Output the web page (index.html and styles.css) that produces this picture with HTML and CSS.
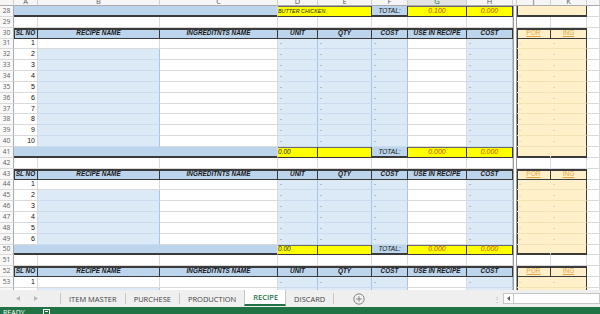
FILE: index.html
```html
<!DOCTYPE html>
<html lang="en">
<head>
    <meta charset="UTF-8">
    <title>Recipe Costing</title>
    <link rel="stylesheet" href="styles.css">
</head>
<body>
    <div class="sheet">
        <table class="grid">
            <colgroup>
                <col class="w-rn"><col class="w-a"><col class="w-b"><col class="w-c"><col class="w-d"><col class="w-e">
                <col class="w-f"><col class="w-g"><col class="w-h"><col class="w-i"><col class="w-j"><col class="w-k"><col class="w-l">
            </colgroup>
            <thead>
                <tr class="ch">
                    <th></th><th>A</th><th>B</th><th>C</th><th>D</th><th>E</th><th>F</th><th class="sel">G</th><th>H</th><th></th><th>J</th><th>K</th><th></th>
                </tr>
            </thead>
            <tbody>
                <tr>
                    <td class="rn">28</td>
                    <td colspan="3" class="b foot"></td>
                    <td colspan="2" class="y title">BUTTER CHICKEN</td>
                    <td class="b lbl foot">TOTAL:</td>
                    <td class="y num">0.100</td>
                    <td class="y num">0.000</td>
                    <td class="gap"></td>
                    <td colspan="2" class="be box-l box-r foot"></td>
                    <td></td>
                </tr>
                <tr>
                    <td class="rn">29</td><td></td><td></td><td></td><td></td><td></td><td></td><td></td><td></td><td class="gap"></td><td></td><td></td><td></td>
                </tr>
                <tr class="hd">
                    <td class="rn">30</td>
                    <th class="first">SL NO</th><th>RECIPE NAME</th><th>INGREDITNTS NAME</th><th>UNIT</th><th>QTY</th><th>COST</th><th>USE IN RECIPE</th><th>COST</th>
                    <td class="gap"></td>
                    <th class="lnk box-l">POR</th><th class="lnk">ING</th>
                    <td></td>
                </tr>
                <tr><td class="rn">31</td><td class="sl">1</td><td></td><td></td><td class="lb d">-</td><td class="lb d">-</td><td class="lb d">-</td><td></td><td class="lb d">-</td><td class="gap"></td><td class="be d box-l">-</td><td class="be d box-r">-</td><td></td></tr>
                <tr><td class="rn">32</td><td class="sl">2</td><td class="lb"></td><td></td><td class="lb d">-</td><td class="lb d">-</td><td class="lb d">-</td><td></td><td class="lb d">-</td><td class="gap"></td><td class="be d box-l">-</td><td class="be d box-r">-</td><td></td></tr>
                <tr><td class="rn">33</td><td class="sl">3</td><td class="lb"></td><td></td><td class="lb d">-</td><td class="lb d">-</td><td class="lb d">-</td><td></td><td class="lb d">-</td><td class="gap"></td><td class="be d box-l">-</td><td class="be d box-r">-</td><td></td></tr>
                <tr><td class="rn">34</td><td class="sl">4</td><td class="lb"></td><td></td><td class="lb d">-</td><td class="lb d">-</td><td class="lb d">-</td><td></td><td class="lb d">-</td><td class="gap"></td><td class="be d box-l">-</td><td class="be d box-r">-</td><td></td></tr>
                <tr><td class="rn">35</td><td class="sl">5</td><td class="lb"></td><td></td><td class="lb d">-</td><td class="lb d">-</td><td class="lb d">-</td><td></td><td class="lb d">-</td><td class="gap"></td><td class="be d box-l">-</td><td class="be d box-r">-</td><td></td></tr>
                <tr><td class="rn">36</td><td class="sl">6</td><td class="lb"></td><td></td><td class="lb d">-</td><td class="lb d">-</td><td class="lb d">-</td><td></td><td class="lb d">-</td><td class="gap"></td><td class="be d box-l">-</td><td class="be d box-r">-</td><td></td></tr>
                <tr><td class="rn">37</td><td class="sl">7</td><td class="lb"></td><td></td><td class="lb d">-</td><td class="lb d">-</td><td class="lb d">-</td><td></td><td class="lb d">-</td><td class="gap"></td><td class="be d box-l">-</td><td class="be d box-r">-</td><td></td></tr>
                <tr><td class="rn">38</td><td class="sl">8</td><td class="lb"></td><td></td><td class="lb d">-</td><td class="lb d">-</td><td class="lb d">-</td><td></td><td class="lb d">-</td><td class="gap"></td><td class="be d box-l">-</td><td class="be d box-r">-</td><td></td></tr>
                <tr><td class="rn">39</td><td class="sl">9</td><td class="lb"></td><td></td><td class="lb d">-</td><td class="lb d">-</td><td class="lb d">-</td><td></td><td class="lb d">-</td><td class="gap"></td><td class="be d box-l">-</td><td class="be d box-r">-</td><td></td></tr>
                <tr><td class="rn">40</td><td class="sl">10</td><td class="lb"></td><td></td><td class="lb d">-</td><td class="lb d">-</td><td class="lb d">-</td><td></td><td class="lb d">-</td><td class="gap"></td><td class="be d box-l">-</td><td class="be d box-r">-</td><td></td></tr>
                <tr>
                    <td class="rn">41</td>
                    <td colspan="3" class="b foot"></td>
                    <td class="y sub">0.00</td><td class="y"></td>
                    <td class="b lbl foot">TOTAL:</td>
                    <td class="y num">0.000</td><td class="y num">0.000</td>
                    <td class="gap"></td>
                    <td class="be box-l foot"></td><td class="be box-r foot"></td>
                    <td></td>
                </tr>
                <tr>
                    <td class="rn">42</td><td></td><td></td><td></td><td></td><td></td><td></td><td></td><td></td><td class="gap"></td><td></td><td></td><td></td>
                </tr>
                <tr class="hd">
                    <td class="rn">43</td>
                    <th class="first">SL NO</th><th>RECIPE NAME</th><th>INGREDITNTS NAME</th><th>UNIT</th><th>QTY</th><th>COST</th><th>USE IN RECIPE</th><th>COST</th>
                    <td class="gap"></td>
                    <th class="lnk box-l">POR</th><th class="lnk">ING</th>
                    <td></td>
                </tr>
                <tr><td class="rn">44</td><td class="sl">1</td><td></td><td></td><td class="lb d">-</td><td class="lb d">-</td><td class="lb d">-</td><td></td><td class="lb d">-</td><td class="gap"></td><td class="be d box-l">-</td><td class="be d box-r">-</td><td></td></tr>
                <tr><td class="rn">45</td><td class="sl">2</td><td class="lb"></td><td></td><td class="lb d">-</td><td class="lb d">-</td><td class="lb d">-</td><td></td><td class="lb d">-</td><td class="gap"></td><td class="be d box-l">-</td><td class="be d box-r">-</td><td></td></tr>
                <tr><td class="rn">46</td><td class="sl">3</td><td class="lb"></td><td></td><td class="lb d">-</td><td class="lb d">-</td><td class="lb d">-</td><td></td><td class="lb d">-</td><td class="gap"></td><td class="be d box-l">-</td><td class="be d box-r">-</td><td></td></tr>
                <tr><td class="rn">47</td><td class="sl">4</td><td class="lb"></td><td></td><td class="lb d">-</td><td class="lb d">-</td><td class="lb d">-</td><td></td><td class="lb d">-</td><td class="gap"></td><td class="be d box-l">-</td><td class="be d box-r">-</td><td></td></tr>
                <tr><td class="rn">48</td><td class="sl">5</td><td class="lb"></td><td></td><td class="lb d">-</td><td class="lb d">-</td><td class="lb d">-</td><td></td><td class="lb d">-</td><td class="gap"></td><td class="be d box-l">-</td><td class="be d box-r">-</td><td></td></tr>
                <tr><td class="rn">49</td><td class="sl">6</td><td class="lb"></td><td></td><td class="lb d">-</td><td class="lb d">-</td><td class="lb d">-</td><td></td><td class="lb d">-</td><td class="gap"></td><td class="be d box-l">-</td><td class="be d box-r">-</td><td></td></tr>
                <tr>
                    <td class="rn">50</td>
                    <td colspan="3" class="b foot"></td>
                    <td class="y sub">0.00</td><td class="y"></td>
                    <td class="b lbl foot">TOTAL:</td>
                    <td class="y num">0.000</td><td class="y num">0.000</td>
                    <td class="gap"></td>
                    <td class="be box-l foot"></td><td class="be box-r foot"></td>
                    <td></td>
                </tr>
                <tr>
                    <td class="rn">51</td><td></td><td></td><td></td><td></td><td></td><td></td><td></td><td></td><td class="gap"></td><td></td><td></td><td></td>
                </tr>
                <tr class="hd">
                    <td class="rn">52</td>
                    <th class="first">SL NO</th><th>RECIPE NAME</th><th>INGREDITNTS NAME</th><th>UNIT</th><th>QTY</th><th>COST</th><th>USE IN RECIPE</th><th>COST</th>
                    <td class="gap"></td>
                    <th class="lnk box-l">POR</th><th class="lnk">ING</th>
                    <td></td>
                </tr>
                <tr><td class="rn">53</td><td class="sl">1</td><td></td><td></td><td class="lb d">-</td><td class="lb d">-</td><td class="lb d">-</td><td></td><td class="lb d">-</td><td class="gap"></td><td class="be d box-l">-</td><td class="be d box-r">-</td><td></td></tr>
                <tr><td class="rn"></td><td></td><td class="lb"></td><td></td><td class="lb"></td><td class="lb"></td><td class="lb"></td><td></td><td class="lb"></td><td class="gap"></td><td class="be box-l"></td><td class="be box-r"></td><td></td></tr>
            </tbody>
        </table>
    </div>

    <div class="tabbar">
        <div class="nav">
            <svg width="4" height="5" viewBox="0 0 4 5"><path d="M4 0 L0 2.5 L4 5 Z" fill="#b9b9b9"/></svg>
            <svg width="4" height="5" viewBox="0 0 4 5"><path d="M0 0 L4 2.5 L0 5 Z" fill="#b9b9b9"/></svg>
        </div>
        <span class="sep"></span>
        <div class="tab">ITEM MASTER</div>
        <span class="sep"></span>
        <div class="tab">PURCHESE</div>
        <span class="sep"></span>
        <div class="tab">PRODUCTION</div>
        <div class="tab active">RECIPE</div>
        <div class="tab">DISCARD</div>
        <span class="sep"></span>
        <div class="add">
            <svg width="12" height="12" viewBox="0 0 12 12">
                <circle cx="6" cy="6" r="5.2" fill="none" stroke="#7a7a7a" stroke-width="0.9"/>
                <path d="M6 3.2 V8.8 M3.2 6 H8.8" stroke="#7a7a7a" stroke-width="0.9"/>
            </svg>
        </div>
        <div class="split">&#8942;</div>
        <div class="hscroll">
            <span class="arrow"><svg width="3" height="5" viewBox="0 0 3 5"><path d="M3 0 L0 2.5 L3 5 Z" fill="#606060"/></svg></span>
            <span class="track"></span>
        </div>
    </div>

    <div class="status">
        <span class="ready">READY</span>
        <svg class="macro" width="8" height="6" viewBox="0 0 8 6">
            <rect x="0.5" y="0.5" width="6" height="5" fill="none" stroke="#ffffff" stroke-width="1"/>
            <rect x="2" y="2" width="3" height="1" fill="#ffffff"/>
        </svg>
    </div>
</body>
</html>
```

FILE: styles.css
```css
body {
    margin: 0;
    width: 600px;
    height: 314px;
    overflow: hidden;
    background: #fff;
    font-family: "Liberation Sans", Arial, sans-serif;
}

.sheet {
    height: 290px;
    overflow: hidden;
}

.grid {
    border-collapse: separate;
    border-spacing: 0;
    table-layout: fixed;
    width: 600px;
}

.w-rn { width: 14px; }
.w-a { width: 24px; }
.w-b { width: 122px; }
.w-c { width: 118px; }
.w-d { width: 40px; }
.w-e { width: 54px; }
.w-f { width: 36px; }
.w-g { width: 59px; }
.w-h { width: 46px; }
.w-i { width: 4px; }
.w-j { width: 34px; }
.w-k { width: 36px; }
.w-l { width: 13px; }

.grid td,
.grid th {
    padding: 0;
    border-right: 1px solid #dadada;
    border-bottom: 1px solid #dadada;
    font-weight: normal;
    line-height: 8px;
    white-space: nowrap;
    overflow: hidden;
    vertical-align: middle;
}

.grid tbody tr {
    height: 10.85px;
}

/* column letters, only bottom part visible */
.ch {
    height: 6px;
}
.ch th {
    background: #f6f6f6;
    border-right-color: #d0d0d0;
    border-bottom-color: #ababab;
    color: #5b5b5b;
    font-family: "Open Sans", sans-serif;
    font-size: 7.5px;
    line-height: 3px;
    vertical-align: top;
}
.ch th.sel {
    background: #e3e3e3;
    color: #217346;
}

.grid td.rn {
    background: #f8f8f8;
    border-right-color: #ababab;
    color: #5e5e5e;
    font-family: "Open Sans", sans-serif;
    font-size: 6.6px;
    text-align: center;
}

.b {
    background: #bcd4ec;
}
.lb {
    background: #dce9f6;
}
.grid td.lb {
    border-right-color: #a9c5e2;
    border-bottom-color: #c9dcf0;
}
.y {
    background: #ffff00;
}
.grid td.y {
    border-right-color: #3a3a3a;
    border-bottom-color: #3a3a3a;
    box-shadow: inset 0 1px 0 #6a6a6a;
}
.be {
    background: #fff0c9;
}
.grid td.be {
    border-right-color: #fff0c9;
    border-bottom-color: #f2e2b4;
}

.grid td.foot {
    border-bottom-color: #3a3a3a;
    box-shadow: inset 0 -1px 0 #3a3a3a;
}
.grid td.box-l,
.grid th.box-l {
    box-shadow: inset 1px 0 0 #3a3a3a;
}
.grid td.be.box-l.foot {
    box-shadow: inset 1px -1px 0 #3a3a3a;
}
.grid td.box-r {
    border-right-color: #3a3a3a;
}

.grid td.gap {
    border-left: 1px solid #9c9c9c;
    border-right: 1px solid #9c9c9c;
    border-bottom: none;
    background: #fff;
}

.title {
    color: #222;
    font-style: italic;
    font-size: 5.4px;
    padding-left: 1px;
}

.lbl {
    color: #111;
    font-size: 6.5px;
    font-style: italic;
    font-weight: bold;
    text-align: center;
}
.grid td.lbl {
    border-right-color: #3a3a3a;
}

.num {
    color: #c24a14;
    font-size: 7px;
    font-style: italic;
    font-weight: bold;
    text-align: center;
}

.sub {
    color: #222;
    font-size: 6.5px;
    font-style: italic;
    padding-left: 1px;
}

.sl {
    color: #111;
    font-size: 7px;
    text-align: right;
    padding-right: 2px !important;
}

.d {
    color: #555;
    font-size: 6px;
    padding-left: 2px !important;
}
.be.d {
    color: #c9a45a;
}

/* header rows */
.hd th {
    background: #bcd4ec;
    color: #151515;
    font-size: 6.4px;
    font-style: italic;
    font-weight: bold;
    text-align: center;
}
.grid .hd th {
    font-weight: bold;
    border-right-color: #3a3a3a;
    border-bottom-color: #3a3a3a;
    box-shadow: inset 0 2px 0 #3a3a3a;
}
.grid .hd th.first {
    box-shadow: inset 0 2px 0 #3a3a3a, inset 1px 0 0 #3a3a3a;
}
.grid .hd th.lnk {
    background: #fff0c9;
    color: #e2a640;
    font-style: normal;
    font-weight: normal;
    font-size: 6.6px;
    text-decoration: underline;
}
.grid .hd th.lnk.box-l {
    box-shadow: inset 0 2px 0 #3a3a3a, inset 1px 0 0 #3a3a3a;
}

/* sheet tabs */
.tabbar {
    height: 17px;
    background: #efefef;
    display: flex;
    align-items: stretch;
    font-family: "Open Sans", sans-serif;
    font-size: 7.5px;
    color: #444;
}
.nav {
    width: 60px;
    display: flex;
    align-items: center;
    gap: 14px;
    padding-left: 16px;
    box-sizing: border-box;
}
.sep {
    width: 1px;
    height: 11px;
    background: #c6c6c6;
    align-self: center;
}
.tab {
    padding: 0 8px;
    display: flex;
    align-items: center;
    white-space: nowrap;
}
.tab.active {
    background: #fff;
    color: #217346;
    font-weight: 600;
    border-left: 1px solid #c6c6c6;
    border-right: 1px solid #c6c6c6;
    border-bottom: 2px solid #217346;
    padding: 0 7px 0 8px;
    margin-bottom: 1px;
}
.add {
    margin-left: 19px;
    display: flex;
    align-items: center;
}
.split {
    margin-left: auto;
    width: 10px;
    color: #a0a0a0;
    font-size: 8px;
    display: flex;
    align-items: center;
}
.hscroll {
    width: 97px;
    display: flex;
    align-items: center;
}
.hscroll .arrow {
    width: 9px;
    height: 9px;
    border: 1px solid #c6c6c6;
    border-right: none;
    background: #fff;
    display: flex;
    align-items: center;
    justify-content: center;
}
.hscroll .track {
    flex: 1;
    height: 9px;
    border: 1px solid #c6c6c6;
    background: #fff;
}

.status {
    height: 7px;
    background: #217346;
    display: flex;
    align-items: flex-start;
    overflow: hidden;
}
.ready {
    color: #fff;
    font-family: "Open Sans", sans-serif;
    font-size: 7px;
    line-height: 7px;
    padding: 2px 0 0 3px;
}
.macro {
    margin: 2px 0 0 18px;
}
```
